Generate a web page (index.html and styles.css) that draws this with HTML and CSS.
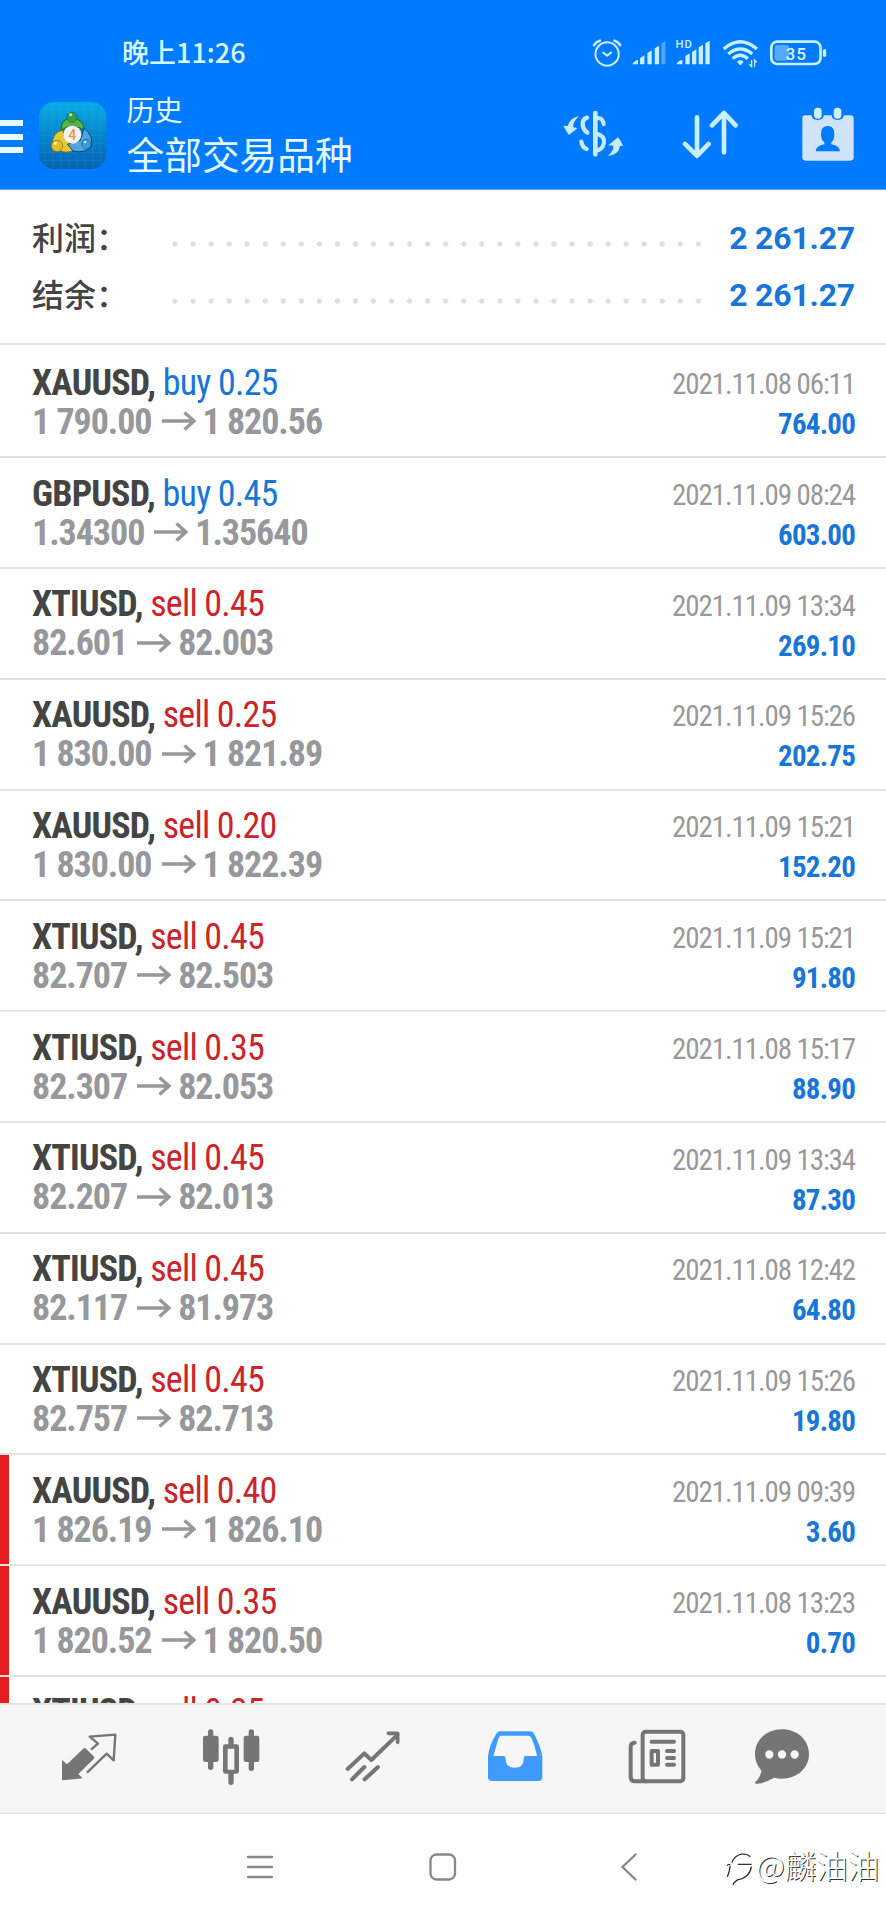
FILE: index.html
```html
<!DOCTYPE html>
<html lang="zh-CN">
<head>
<meta charset="utf-8">
<title>历史</title>
<link rel="stylesheet" href="styles.css">
</head>
<body>
<svg width="0" height="0" class="defs"><symbol id="arr" viewBox="0 0 34 20"><path d="M0 10H32M22.500 1.500L32 10l-9.500 8.500"/></symbol></svg>
<div class="app">
  <header class="header">
    <div class="status">
      <span class="clock">晚上11:26</span>
      <svg class="status-icons" viewBox="145 50 710 100">
        <g fill="none" stroke="#c6f0ff" stroke-width="6" stroke-linecap="round">
          <circle cx="190" cy="101" r="35"/>
          <path d="M178 97l12 9 12-9" stroke-linejoin="round"/>
          <path d="M151 74q6-10 17-13M229 74q-6-10-17-13" stroke-width="8"/>
        </g>
        <g fill="#c6f0ff">
          <path d="M266 132q4-10 17-14v14zM289 113l13-8v27h-13zM311 98l13-8v42h-13zM333 84l13-8v56h-13z"/>
          <path d="M353 69l12-7v70h-12z" opacity=".4"/>
          <path d="M398 132q4-10 18-14v14zM425 107l13-8v33h-13zM445 95l13-8v45h-13zM465 81l13-8v59h-13zM485 69l13-8v71h-13z"/>
          <text class="hd" x="395" y="84">HD</text>
          <path d="M580 124q10-8 20 0l-8 10h-4z"/>
        </g>
        <g fill="none" stroke="#c6f0ff" stroke-width="10">
          <path d="M540 86q50-43 100 0M554 101q36-30 72 0M567 115q22-20 46 0"/>
          <path d="M624 119v20l-7-7M633 139v-20l6 7" stroke-width="4"/>
          <rect x="683" y="64" width="148" height="67" rx="18" stroke-width="8"/>
        </g>
        <rect x="693" y="74" width="44" height="47" rx="9" fill="#55aafb"/>
        <rect x="838" y="86" width="10" height="24" rx="5" fill="#c6f0ff"/>
        <text class="battery" x="758" y="118">35</text>
      </svg>
    </div>
    <div class="toolbar">
      <div class="menu"><i></i><i></i><i></i></div>
      <svg class="logo" viewBox="114 34 210 210">
        <defs>
          <linearGradient id="sky" x1="0" y1="0" x2="0" y2="1"><stop offset="0" stop-color="#08aae5"/><stop offset="1" stop-color="#0661b4"/></linearGradient>
        </defs>
        <rect x="117" y="37" width="202" height="201" rx="46" fill="url(#sky)"/>
        <path d="M130 60H306M120 86H316M120 111H316M120 137H316M120 162H316M120 188H316M128 212H308M134 50V226M158 39V236M182 38V237M206 38V237M230 38V237M254 38V237M278 39V236M302 50V226" stroke="#40b8e8" stroke-width="1.5" opacity=".35" fill="none"/>
        <path d="M184 123q-5-36 32-37 37 1 37 38-10-12-36-12-23 0-33 11z" fill="#56b34a" stroke="#145b3b" stroke-width="3"/>
        <path d="M158 165q-3-37 30-44l9 28 24 31q-12 12-40 5z" fill="#e3c838" stroke="#77631b" stroke-width="3"/>
        <path d="M252 116q30 22 22 54-21 23-55 14l-16-20 38-12z" fill="#4fa5dc" stroke="#123e73" stroke-width="3"/>
        <circle cx="216" cy="83" r="15" fill="#3a9e43" stroke="#17603b" stroke-width="2"/>
        <circle cx="171" cy="169" r="17" fill="#dfc12b" stroke="#8a6b12" stroke-width="2"/>
        <circle cx="259" cy="163" r="14" fill="#3d9add" stroke="#155a9a" stroke-width="2"/>
        <circle cx="212" cy="75" r="5" fill="#b5e59a"/><circle cx="166" cy="161" r="5" fill="#fff7a0"/><circle cx="255" cy="157" r="4" fill="#bfe6ff"/>
        <circle cx="217" cy="135" r="27" fill="#f5f3f0"/>
        <text class="four" x="217" y="151">4</text>
      </svg>
      <div class="titles"><div class="title">历史</div><div class="subtitle">全部交易品种</div></div>
      <svg class="tool t1" viewBox="58 262 182 154">
        <g fill="none" stroke="#c6ebff" stroke-width="12" stroke-linecap="round">
          <path d="M155 280V404" stroke-width="14"/>
          <path d="M155 296q22-6 25 18M155 341q29 7 26 28-4 23-26 24"/>
          <path d="M130 294q-14 4-13 23 2 15 14 22M113 366q3 18 16 22" stroke-width="13"/>
        </g>
        <path d="M106 290q-26 3-34 29l-13-1q8 17 17 28l25-20-13-4q0-16 18-32zM191 409q36-4 38-31l9 1q-5-16-15-26l-29 24 15 1q1 18-18 31z" fill="#c6ebff"/>
      </svg>
      <svg class="tool t2" viewBox="412 262 176 154">
        <path d="M460 293V408M424 373l36 36 35-36M541 398V281M505 317l36-37 35 37" fill="none" stroke="#c6efff" stroke-width="14" stroke-linecap="round" stroke-linejoin="round"/>
      </svg>
      <svg class="tool t3" viewBox="772 262 162 164">
        <path fill="#cfe4fb" fill-rule="evenodd" d="M784 287h20q0 14 18 14t18-14h24q0 14 18 14t18-14h20q10 0 10 10v116q0 10-10 10H786q-10 0-10-10V297q0-10 8-10zM832 342q0-23 20-23t20 23q0 20-9 25v7q25 5 26 21H816q1-16 26-21v-7q-10-5-10-25z"/>
        <rect x="811" y="264" width="23" height="33" rx="11" fill="#cfeeff"/><rect x="870" y="264" width="23" height="33" rx="11" fill="#cfeeff"/>
      </svg>
    </div>
  </header>

  <section class="summary">
    <div class="sum-row"><span class="label">利润：</span><span class="dots"></span><b class="total">2 261.27</b></div>
    <div class="sum-row"><span class="label">结余：</span><span class="dots"></span><b class="total">2 261.27</b></div>
  </section>

  <main class="deals">
    <div class="deal"><div class="left"><div class="line"><b>XAUUSD,</b> <span class="buy">buy 0.25</span></div><div class="prices">1 790.00<svg class="arrow"><use href="#arr"/></svg>1 820.56</div></div><div class="right"><div class="date">2021.11.08 06:11</div><div class="profit">764.00</div></div></div>
    <div class="deal"><div class="left"><div class="line"><b>GBPUSD,</b> <span class="buy">buy 0.45</span></div><div class="prices">1.34300<svg class="arrow"><use href="#arr"/></svg>1.35640</div></div><div class="right"><div class="date">2021.11.09 08:24</div><div class="profit">603.00</div></div></div>
    <div class="deal"><div class="left"><div class="line"><b>XTIUSD,</b> <span class="sell">sell 0.45</span></div><div class="prices">82.601<svg class="arrow"><use href="#arr"/></svg>82.003</div></div><div class="right"><div class="date">2021.11.09 13:34</div><div class="profit">269.10</div></div></div>
    <div class="deal"><div class="left"><div class="line"><b>XAUUSD,</b> <span class="sell">sell 0.25</span></div><div class="prices">1 830.00<svg class="arrow"><use href="#arr"/></svg>1 821.89</div></div><div class="right"><div class="date">2021.11.09 15:26</div><div class="profit">202.75</div></div></div>
    <div class="deal"><div class="left"><div class="line"><b>XAUUSD,</b> <span class="sell">sell 0.20</span></div><div class="prices">1 830.00<svg class="arrow"><use href="#arr"/></svg>1 822.39</div></div><div class="right"><div class="date">2021.11.09 15:21</div><div class="profit">152.20</div></div></div>
    <div class="deal"><div class="left"><div class="line"><b>XTIUSD,</b> <span class="sell">sell 0.45</span></div><div class="prices">82.707<svg class="arrow"><use href="#arr"/></svg>82.503</div></div><div class="right"><div class="date">2021.11.09 15:21</div><div class="profit">91.80</div></div></div>
    <div class="deal"><div class="left"><div class="line"><b>XTIUSD,</b> <span class="sell">sell 0.35</span></div><div class="prices">82.307<svg class="arrow"><use href="#arr"/></svg>82.053</div></div><div class="right"><div class="date">2021.11.08 15:17</div><div class="profit">88.90</div></div></div>
    <div class="deal"><div class="left"><div class="line"><b>XTIUSD,</b> <span class="sell">sell 0.45</span></div><div class="prices">82.207<svg class="arrow"><use href="#arr"/></svg>82.013</div></div><div class="right"><div class="date">2021.11.09 13:34</div><div class="profit">87.30</div></div></div>
    <div class="deal"><div class="left"><div class="line"><b>XTIUSD,</b> <span class="sell">sell 0.45</span></div><div class="prices">82.117<svg class="arrow"><use href="#arr"/></svg>81.973</div></div><div class="right"><div class="date">2021.11.08 12:42</div><div class="profit">64.80</div></div></div>
    <div class="deal"><div class="left"><div class="line"><b>XTIUSD,</b> <span class="sell">sell 0.45</span></div><div class="prices">82.757<svg class="arrow"><use href="#arr"/></svg>82.713</div></div><div class="right"><div class="date">2021.11.09 15:26</div><div class="profit">19.80</div></div></div>
    <div class="deal marked"><div class="left"><div class="line"><b>XAUUSD,</b> <span class="sell">sell 0.40</span></div><div class="prices">1 826.19<svg class="arrow"><use href="#arr"/></svg>1 826.10</div></div><div class="right"><div class="date">2021.11.09 09:39</div><div class="profit">3.60</div></div></div>
    <div class="deal marked"><div class="left"><div class="line"><b>XAUUSD,</b> <span class="sell">sell 0.35</span></div><div class="prices">1 820.52<svg class="arrow"><use href="#arr"/></svg>1 820.50</div></div><div class="right"><div class="date">2021.11.08 13:23</div><div class="profit">0.70</div></div></div>
    <div class="deal marked"><div class="left"><div class="line"><b>XTIUSD,</b> <span class="sell">sell 0.35</span></div></div></div>
  </main>

  <nav class="tabs">
    <svg class="tab" viewBox="180 115 174 174">
      <path d="M186 211l15 13 49-47q4-4 8 0l23 23q4 4 0 8l-46 45 13 13-58 6q-4 0-4-4z" fill="#757575"/>
      <path d="M273 180l21-18-25-21 77-6-5 77-21-20-59 57" fill="none" stroke="#757575" stroke-width="7" stroke-linejoin="round"/>
    </svg>
    <svg class="tab" viewBox="605 115 174 174">
      <g fill="#757575"><rect x="608" y="138" width="47" height="79" rx="7"/><rect x="730" y="138" width="47" height="79" rx="7"/><rect x="623" y="119" width="16" height="122" rx="8"/><rect x="745" y="119" width="16" height="125" rx="8"/><path fill-rule="evenodd" d="M684 164v-15q0-8 8-8t8 8v15h9q7 0 7 7v74q0 7-7 7h-9v26q0 8-8 8t-8-8v-26h-9q-7 0-7-7v-74q0-7 7-7zM682 177v63h20v-63z"/></g>
    </svg>
    <svg class="tab" viewBox="1032 115 174 174">
      <path d="M1043 238l50-47 21 20 76-73M1056 269l37-37M1094 269l40-37" fill="none" stroke="#757575" stroke-width="12" stroke-linecap="round" stroke-linejoin="round"/>
      <path d="M1165 131h28v27" fill="none" stroke="#757575" stroke-width="11" stroke-linecap="round" stroke-linejoin="round"/>
    </svg>
    <svg class="tab" viewBox="129 115 174 174">
      <path fill="#409bff" fill-rule="evenodd" d="M172 125h88q10 0 14 9 20 40 24 65v63q0 12-12 12H147q-12 0-12-12v-63q4-32 24-65 4-9 13-9zM175 138q-5 0-8 7l-16 54h32q5 0 5 8 0 27 27 27t27-27q0-8 5-8h35q-8-37-18-56-2-5-9-5z"/>
    </svg>
    <svg class="tab" viewBox="556 115 174 174">
      <g fill="none" stroke="#757575" stroke-width="12" stroke-linecap="round" stroke-linejoin="round"><rect x="600" y="126" width="122" height="149" rx="9"/><path d="M576 159q-12 0-12 12v91q0 13 13 13h34M627 156h67M627 184h19v41h-19zM673 184h21M673 205h21M673 225h21"/></g>
    </svg>
    <svg class="tab" viewBox="930 115 174 174">
      <path fill="#757575" fill-rule="evenodd" d="M1017 119c46 0 81 32 81 74s-35 74-81 74q-10 0-24-3-29 18-53 18-6 0-3-5 13-10 19-33-20-22-20-51c0-42 35-74 81-74zM979 182a12 12 0 1 0 0 25 12 12 0 0 0 0-25zM1017 182a12 12 0 1 0 0 25 12 12 0 0 0 0-25zM1055 182a12 12 0 1 0 0 25 12 12 0 0 0 0-25z"/>
    </svg>
  </nav>

  <footer class="sysnav">
    <svg class="sys s1" viewBox="0 0 28 28"><path d="M2 4h24M2 14h24M2 24h24"/></svg>
    <svg class="sys s2" viewBox="0 0 28 28"><rect x="1.5" y="1.5" width="24.5" height="25" rx="6"/></svg>
    <svg class="sys s3" viewBox="0 0 28 28"><path d="M20.500 1.500L7.500 14l13 12.500"/></svg>
    <div class="watermark">
      <svg class="mark" viewBox="845 490 88 108"><path d="M851 534q4-6 10-3M861 534q-2 18-9 34M866 524q8-20 28-25 20-2 28 8M884 530h42M925 537q-5 34-42 40-9 6-14 15" fill="none" stroke="#333" stroke-width="4"/></svg>
      <span>@麟油油</span>
    </div>
  </footer>
</div>
</body>
</html>
```
FILE: styles.css
```css
* { box-sizing: border-box; }
body { margin: 0; background: #fff; font-family: Roboto, "Noto Sans CJK SC", sans-serif; }
.app { width: 886px; height: 1920px; display: flex; flex-direction: column; overflow: hidden; }
svg { display: block; flex: none; }

.header { height: 190px; flex: none; background: #007aff; border-bottom: 1px solid #6aa9ea; color: #e2fcff; font-family: "Noto Sans CJK SC", sans-serif; }
.status { height: 90px; display: flex; align-items: flex-start; padding-left: 122px; }
.clock { font-size: 27px; line-height: 40px; font-weight: 500; margin-top: 32px; width: 470px; color: #d8faff; }
.status-icons { width: 236.700px; height: 33.300px; margin-top: 36.700px; }
.hd { font: 500 34px Roboto, sans-serif; letter-spacing: 3px; }
.battery { font: 500 52px Roboto, sans-serif; text-anchor: middle; fill: #d8f4ff; letter-spacing: 3px; }
.toolbar { height: 99px; display: flex; align-items: flex-start; }
.menu { width: 23px; display: flex; flex-direction: column; gap: 7.500px; margin: 30px 15px 0 0; }
.menu i { height: 6px; background: #e6fcff; }
.logo { width: 70px; height: 70px; margin-top: 11px; }
.four { font: 500 42px Roboto, sans-serif; text-anchor: middle; fill: #ef9147; }
.titles { width: 418px; padding-left: 18.500px; }
.title { font-size: 28px; line-height: 36px; margin-top: 1px; }
.subtitle { font-size: 37.700px; line-height: 50px; margin-top: 1px; }
.tool { height: 51.300px; margin-top: 17.300px; }
.t1 { width: 60.700px; margin-left: 37px; }
.t2 { width: 58.700px; margin-left: 57.300px; }
.t3 { width: 54px; height: 54.700px; margin-left: 61.300px; }

.summary { height: 155px; flex: none; padding: 20px 31px 0 32px; border-bottom: 2px solid #e2e2e2; }
.sum-row { height: 57.300px; display: flex; align-items: flex-start; }
.label { width: 134px; font: 500 32px/56px "Noto Sans CJK SC", sans-serif; color: #444; margin-top: -2px; }
.dots { width: 542px; height: 6px; margin: 31px 18px 0 0; background: radial-gradient(circle at 9px 3px, #dedede 2.200px, transparent 3.100px) 0 0 / 18.050px 6px; }
.total { flex: 1; text-align: right; font-size: 32px; line-height: 56px; color: #1976d9; white-space: nowrap; letter-spacing: -.2px; }

.deals { height: 1358px; flex: none; padding-top: 2.500px; overflow: hidden; font-family: "Roboto Condensed", Roboto, sans-serif; font-stretch: 75%; }
.deal { height: 110.800px; display: flex; justify-content: space-between; padding: 0 31px 0 32px; border-bottom: 2px solid #e2e2e2; white-space: nowrap; }
.left { padding-top: 16.300px; }
.line { font-size: 36px; line-height: 39px; color: #444; letter-spacing: -.8px; }
.line b { font-weight: 700; }
.buy { color: #1976d9; }
.sell { color: #cb242b; }
.prices { display: flex; align-items: center; font-size: 36px; line-height: 39px; font-weight: 700; color: #97989c; letter-spacing: -1.050px; }
.arrow { width: 34px; height: 20px; margin: -2px 7px 0 10px; fill: none; stroke: #97989c; stroke-width: 3.300; }
.right { padding-top: 17.500px; text-align: right; }
.date { font-size: 29px; line-height: 39px; color: #999; letter-spacing: -1.100px; }
.profit { font-size: 29px; line-height: 40px; font-weight: 700; color: #1976d9; letter-spacing: -.8px; }
.marked { background: linear-gradient(#e41e1e, #e41e1e) 0 0 / 9px 100% no-repeat; background-clip: padding-box; }

.tabs { height: 111px; flex: none; display: flex; background: #f6f6f6; border-top: 2px solid #e2e2e2; border-bottom: 1px solid #e0e0e0; padding: 23px 0 0 60px; gap: 84px; }
.tab { width: 58px; height: 58px; }
.tab:last-child { margin-left: -17px; }

.sysnav { height: 106px; flex: none; display: flex; padding-top: 38px; }
.sys { width: 28px; height: 28px; fill: none; stroke: #888; stroke-width: 2.300; stroke-linecap: round; margin-top: 1px; }
.s1 { margin-left: 246px; }
.s2 { margin-left: 155px; }
.s3 { margin-left: 158px; }
.watermark { margin-left: 82px; display: flex; color: #fff; font: 300 31.500px/40px "Noto Sans CJK SC", sans-serif; text-shadow: 1px 1px 0 #333; white-space: nowrap; margin-top: -8px; }
.mark { width: 29px; height: 36px; margin: 7px 2px 0 0; }
```
